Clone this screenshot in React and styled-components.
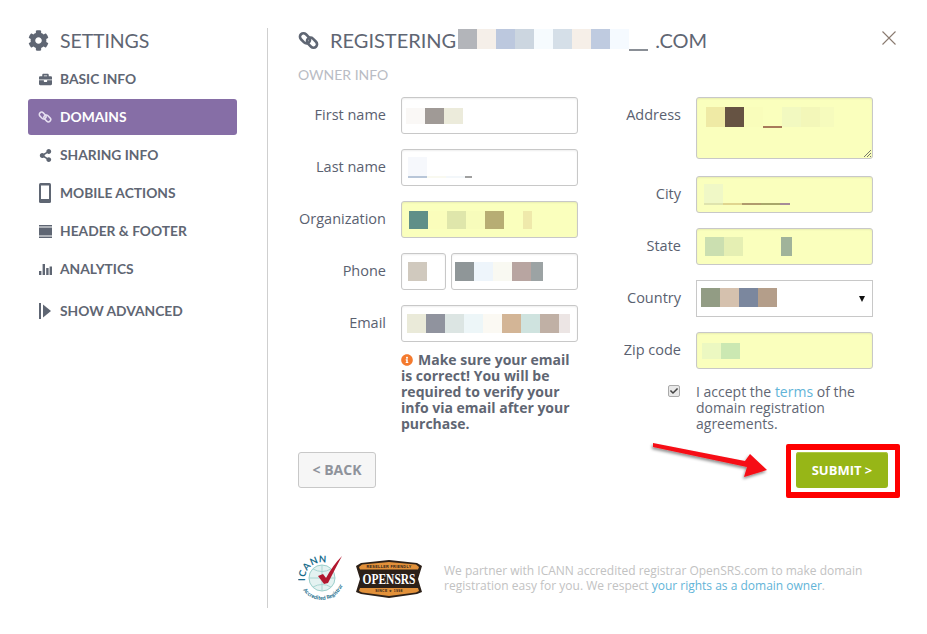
import React from "react";
import styled, { createGlobalStyle } from "styled-components";
import { FaCog, FaBriefcase, FaShareAlt, FaInfoCircle, FaCheck } from "react-icons/fa";

const Global = createGlobalStyle`
  html, body { margin: 0; padding: 0; background: #fff; }
  body { font-family: "Open Sans", "Liberation Sans", sans-serif; color: #5f6673; }
`;

const Page = styled.div`
  display: flex;
  width: 927px;
  height: 634px;
  box-sizing: border-box;
  padding: 28px 0 26px 28px;
`;

const Sidebar = styled.nav`
  width: 209px;
  margin-right: 30px;
  flex: none;
`;

const Brand = styled.div`
  display: flex;
  align-items: center;
  gap: 11px;
  height: 26px;
  margin-bottom: 7px;
  font: 400 19.5px/26px Lato, sans-serif;
  letter-spacing: -0.1px;
  svg { font-size: 21px; margin-top: -2px; }
`;

const NavList = styled.div`
  display: flex;
  flex-direction: column;
  gap: 2px;
`;

const NavItem = styled.div`
  display: flex;
  align-items: center;
  height: 36px;
  padding-left: 10px;
  margin-top: ${(p) => (p.$gap ? "4px" : "0")};
  border-radius: 3px;
  background: ${(p) => (p.$active ? "#866ea6" : "transparent")};
  color: ${(p) => (p.$active ? "#fff" : "#5f6673")};
  font: 700 13.8px/36px Lato, sans-serif;
`;

const NavIcon = styled.span`
  display: flex;
  justify-content: center;
  align-items: center;
  width: 14px;
  margin-right: 8px;
  font-size: 13px;
  color: ${(p) => (p.$active ? "#e6dff0" : "#5f6673")};
`;

const Main = styled.main`
  position: relative;
  display: flex;
  flex-direction: column;
  width: 599px;
  padding-left: 30px;
  border-left: 1px solid #cfcfcf;
`;

const TitleRow = styled.header`
  display: flex;
  align-items: center;
  justify-content: space-between;
  height: 24px;
`;

const Title = styled.h1`
  display: flex;
  align-items: center;
  margin: 0;
  font: 400 20px/24px Lato, sans-serif;
  color: #5f6673;
`;

const TitleIcon = styled.span`
  display: flex;
  margin-right: 11px;
`;

const Close = styled.svg`
  width: 16px;
  height: 16px;
  margin-top: -4px;
`;

const Section = styled.div`
  margin-top: 15px;
  font: 400 14px/16px Lato, sans-serif;
  color: #b9bcc4;
`;

const Columns = styled.div`
  display: grid;
  grid-template-columns: 280px 257px;
  column-gap: 38px;
  margin-top: 14px;
`;

const Column = styled.div`
  display: flex;
  flex-direction: column;
  gap: 15px;
`;

const Row = styled.div`
  display: flex;
  gap: 15px;
  margin-bottom: ${(p) => p.$after || 0}px;
`;

const Label = styled.label`
  flex: 1;
  text-align: right;
  font-size: 14.5px;
  line-height: 36px;
  font-weight: 400;
  color: #5a6170;
`;

const Inputs = styled.div`
  display: flex;
  gap: 5px;
  width: 177px;
  flex: none;
`;

const Field = styled.div`
  position: relative;
  display: flex;
  box-sizing: border-box;
  align-items: ${(p) => (p.$top ? "flex-start" : "center")};
  flex: ${(p) => (p.$w ? `0 0 ${p.$w}px` : "1")};
  height: ${(p) => p.$h || 37}px;
  padding: ${(p) => (p.$top ? "9px 0 0 9px" : `0 0 0 ${p.$pad ?? 6}px`)};
  border: 1px solid #c8c8c8;
  border-radius: 3px;
  background: ${(p) => (p.$fill ? "#faffbd" : "#fff")};
  box-shadow: inset 0 1px 2px rgba(0, 0, 0, 0.07);
`;

const SelectField = styled(Field)`
  border-radius: 0;
  box-shadow: none;
`;

const Caret = styled.span`
  position: absolute;
  right: 7px;
  top: 15px;
  width: 0;
  height: 0;
  border-left: 3px solid transparent;
  border-right: 3px solid transparent;
  border-top: 6px solid #111;
`;

const Grip = styled.svg`
  position: absolute;
  right: 0;
  bottom: 0;
  width: 9px;
  height: 9px;
`;

const Mosaic = styled.div`
  display: flex;
  align-items: flex-start;
  margin: ${(p) => p.$margin || "0"};
`;

const Tile = styled.span`
  display: block;
  box-sizing: content-box;
  width: ${(p) => p.$w || 19}px;
  height: ${(p) => p.$h || 19}px;
  background: ${(p) => p.$c || "transparent"};
  border-bottom: ${(p) => (p.$u ? `2px solid ${p.$u}` : "0")};
`;

const Note = styled.p`
  margin: -5px 0 0 103px;
  width: 172px;
  font-size: 14px;
  line-height: 16px;
  font-weight: 700;
  color: #5f6673;
  svg { font-size: 12px; color: #f47a2e; margin-right: 5px; vertical-align: -1px; }
`;

const Agree = styled.div`
  display: flex;
  font-size: 14px;
  line-height: 16px;
  color: #5f6673;
`;

const Check = styled.span`
  display: flex;
  align-items: center;
  justify-content: center;
  box-sizing: border-box;
  width: 12px;
  height: 12px;
  margin: 1px 16px 0 52px;
  flex: none;
  border: 1px solid #aaa;
  border-radius: 2px;
  background: #e8e8e8;
  color: #444;
  font-size: 8px;
`;

const AgreeText = styled.span`
  width: 170px;
`;

const Link = styled.span`
  color: #62b4d8;
`;

const Actions = styled.div`
  position: relative;
  display: flex;
  justify-content: space-between;
  align-items: center;
  margin-top: 20px;
  width: 590px;
`;

const BackButton = styled.button`
  width: 78px;
  height: 36px;
  padding: 0;
  border: 1px solid #c8c8c8;
  border-radius: 3px;
  background: #f6f6f6;
  color: #8f939b;
  font: 700 14px/34px "Open Sans", sans-serif;
`;

const SubmitWrap = styled.div`
  position: relative;
`;

const SubmitButton = styled.button`
  display: block;
  width: 92px;
  height: 36px;
  padding: 0;
  border: 0;
  border-radius: 3px;
  background: #97b617;
  box-shadow: inset 0 1px 0 #aec845;
  color: #fff;
  font: 700 13px/36px "Open Sans", sans-serif;
`;

const Frame = styled.span`
  position: absolute;
  top: -8px;
  bottom: -10px;
  left: -10px;
  right: -12px;
  border: 5px solid #fe0000;
  border-width: 6px 5px;
  border-radius: 2px;
  pointer-events: none;
`;

const Arrow = styled.svg`
  position: absolute;
  left: 352px;
  top: -12px;
  width: 124px;
  height: 46px;
  overflow: visible;
`;

const Footer = styled.footer`
  display: flex;
  align-items: center;
  margin-top: auto;
  margin-bottom: 3px;
`;

const Logos = styled.div`
  display: flex;
  align-items: center;
  gap: 4px;
  margin-right: 22px;
`;

const FooterText = styled.p`
  margin: -3px 0 0;
  width: 430px;
  font-size: 12px;
  line-height: 15px;
  color: #c2c2c2;
`;

const ChainIcon = ({ size = 21, color = "#5f6673", weight = 3 }) => (
  <svg width={size} height={size} viewBox="0 0 24 24" fill="none" stroke={color} strokeWidth={weight}>
    <rect x="1.5" y="5.5" width="13" height="8" rx="4" transform="rotate(45 8 9.5)" />
    <rect x="9.5" y="10.5" width="13" height="8" rx="4" transform="rotate(45 16 14.5)" />
  </svg>
);
const MobileIcon = () => (
  <svg width="12" height="20" viewBox="0 0 12 20">
    <rect x="0" y="0" width="12" height="20" rx="1.5" fill="#5f6673" />
    <rect x="2" y="2.5" width="8" height="13.5" fill="#fff" />
  </svg>
);
const HeaderIcon = () => (
  <svg width="13" height="13" viewBox="0 0 13 13">
    <rect x="0" y="0" width="13" height="1.5" fill="#5f6673" />
    <rect x="0" y="2.5" width="13" height="8" fill="#5f6673" />
    <rect x="0" y="11.5" width="13" height="1.5" fill="#5f6673" />
  </svg>
);
const ChartIcon = () => (
  <svg width="13" height="11" viewBox="0 0 13 11">
    <rect x="0" y="7" width="2.4" height="4" fill="#5f6673" />
    <rect x="3.6" y="0" width="2.4" height="11" fill="#5f6673" />
    <rect x="7.2" y="4" width="2.4" height="7" fill="#5f6673" />
    <rect x="10.6" y="2.5" width="2.4" height="8.5" fill="#5f6673" />
  </svg>
);
const AdvancedIcon = () => (
  <svg width="12" height="16" viewBox="0 0 12 16">
    <rect x="0" y="0" width="2" height="16" fill="#5f6673" />
    <path d="M4 1.5 L12 8 L4 14.5 Z" fill="#5f6673" />
  </svg>
);

const IcannLogo = () => (
  <svg width="54" height="52" viewBox="0 0 54 52">
    <defs>
      <path id="icannTop" d="M7 28 A17 17 0 0 1 41 25" />
      <path id="icannBottom" d="M5 37 A22.5 22.5 0 0 0 46 22" />
    </defs>
    <circle cx="24" cy="25" r="13" fill="#e4f2f1" stroke="#9ccfcb" strokeWidth="1" />
    <path d="M11 25 H37 M24 12 V38 M15 16 Q24 21 33 16 M15 34 Q24 29 33 34" stroke="#a9d6d2" strokeWidth="1" fill="none" />
    <text fontFamily="Lato, sans-serif" fontWeight="700" fontSize="9.5" fill="#1a6d8c" letterSpacing="0.5">
      <textPath href="#icannTop">ICANN</textPath>
    </text>
    <text fontFamily="Lato, sans-serif" fontWeight="700" fontSize="5.4" fill="#1a6d8c">
      <textPath href="#icannBottom">Accredited Registrar</textPath>
    </text>
    <path d="M20 23 L25 21 L28 25 Q35 12 44 3 Q37 16 30 30 L26 31 Z" fill="#b2182f" />
  </svg>
);

const OpenSrsLogo = () => (
  <svg width="66" height="38" viewBox="0 0 66 38">
    <path d="M5 3 L33 0 L61 3 L66 6 L62 19 L66 32 L61 34 L33 38 L5 34 L0 32 L4 19 L0 6 Z" fill="#2c2018" />
    <path d="M6 4.5 L33 2 L60 4.5 L63 7 L62 9.5 H4 L3 7 Z" fill="#e2913a" />
    <path d="M4 28 H62 L63 31 L60 32.5 L33 36 L6 32.5 L3 31 Z" fill="#e2913a" />
    <text x="33" y="8.3" textAnchor="middle" fontFamily="Liberation Sans, sans-serif" fontWeight="700" fontSize="3.8" letterSpacing="0.3" fill="#2c2018">RESELLER FRIENDLY</text>
    <text transform="translate(33 24) scale(1 1.3)" textAnchor="middle" fontFamily="Liberation Serif, serif" fontWeight="700" fontSize="11.5" fill="#fff">OPENSRS</text>
    <text x="33" y="32" textAnchor="middle" fontFamily="Liberation Sans, sans-serif" fontWeight="700" fontSize="3.4" letterSpacing="0.4" fill="#2c2018">SINCE ★ 1998</text>
  </svg>
);

const App = () => (
  <Page>
    <Global />
    <Sidebar>
      <Brand><FaCog />SETTINGS</Brand>
      <NavList>
        <NavItem><NavIcon><FaBriefcase /></NavIcon>BASIC INFO</NavItem>
        <NavItem $active><NavIcon $active><ChainIcon size={14} color="#e6dff0" weight={2.6} /></NavIcon>DOMAINS</NavItem>
        <NavItem><NavIcon><FaShareAlt /></NavIcon>SHARING INFO</NavItem>
        <NavItem><NavIcon><MobileIcon /></NavIcon>MOBILE ACTIONS</NavItem>
        <NavItem><NavIcon><HeaderIcon /></NavIcon>HEADER &amp; FOOTER</NavItem>
        <NavItem><NavIcon><ChartIcon /></NavIcon>ANALYTICS</NavItem>
        <NavItem $gap><NavIcon><AdvancedIcon /></NavIcon>SHOW ADVANCED</NavItem>
      </NavList>
    </Sidebar>
    <Main>
      <TitleRow>
        <Title>
          <TitleIcon><ChainIcon /></TitleIcon>REGISTERING
          <Mosaic $margin="0 7px 0 2px">
            {["#b3b5ba", "#f5efe9", "#bcc8de", "#ccd6e0", "#f6fbfe", "#d5dfe8", "#f6efe8", "#bfcbe0", "#f5faff"].map((c) => (
              <Tile key={c} $c={c} $h={20} />
            ))}
            <Tile $h={20} $u="#8a8f96" />
          </Mosaic>
          .COM
        </Title>
        <Close viewBox="0 0 16 16">
          <path d="M1.5 1.5 L14.5 14.5 M14.5 1.5 L1.5 14.5" stroke="#8a7a70" strokeWidth="1.1" fill="none" />
        </Close>
      </TitleRow>
      <Section>OWNER INFO</Section>
      <Columns>
        <Column>
          <Row>
            <Label>First name</Label>
            <Inputs><Field><Mosaic $margin="0 0 0 -2px">
              <Tile $c="#faf8f6" $h={16} /><Tile $c="#a09a96" $h={16} /><Tile $c="#ecebdb" $h={16} />
            </Mosaic></Field></Inputs>
          </Row>
          <Row>
            <Label>Last name</Label>
            <Inputs><Field $pad={6}><Mosaic>
              <Tile $c="#f6f8fc" $u="#b8c6d8" /><Tile $w={19} $u="#f9f9f0" /><Tile $w={19} $u="#f3f7fa" /><Tile $w={7} $u="#a0a0a0" />
            </Mosaic></Field></Inputs>
          </Row>
          <Row>
            <Label>Organization</Label>
            <Inputs><Field $fill $pad={7}><Mosaic>
              <Tile $c="#5f8f88" $h={18} /><Tile $c="#fafdbb" $h={18} /><Tile $c="#dfe6ab" $h={18} /><Tile $c="#f7fcbb" $h={18} /><Tile $c="#b7ad74" $h={18} /><Tile $h={18} /><Tile $c="#efe9ab" $w={9} $h={18} />
            </Mosaic></Field></Inputs>
          </Row>
          <Row>
            <Label>Phone</Label>
            <Inputs>
              <Field $w={45}><Tile $c="#d0c9be" /></Field>
              <Field $pad={3}><Mosaic>
                <Tile $c="#8f9698" /><Tile $c="#eef5fb" /><Tile $c="#f9f9f2" /><Tile $c="#b8a5a1" /><Tile $c="#9ca3a4" $w={12} />
              </Mosaic></Field>
            </Inputs>
          </Row>
          <Row>
            <Label>Email</Label>
            <Inputs><Field $pad={5}><Mosaic>
              <Tile $c="#eaead9" /><Tile $c="#90939e" /><Tile $c="#dce5e3" /><Tile $c="#edf6f8" /><Tile $c="#fbf9f3" /><Tile $c="#d3b596" /><Tile $c="#cfe3df" /><Tile $c="#c0b0a5" /><Tile $c="#ece5e4" $w={11} />
            </Mosaic></Field></Inputs>
          </Row>
          <Note><FaInfoCircle />Make sure your email is correct! You will be required to verify your info via email after your purchase.</Note>
        </Column>
        <Column>
          <Row $after={2}>
            <Label>Address</Label>
            <Inputs><Field $fill $top $h={62}>
              <Mosaic>
                <Tile $c="#efeaa5" $h={20} /><Tile $c="#665343" $h={20} /><Tile $c="#f9fdbb" $h={20} /><Tile $h={19} $u="#a87a5a" /><Tile $c="#f2f9c0" $h={20} /><Tile $c="#f3f7b9" $h={20} /><Tile $c="#f6fbbd" $w={14} $h={20} />
              </Mosaic>
              <Grip viewBox="0 0 9 9"><path d="M1 8 L8 1 M4 8 L8 4 M7 8 L8 7" stroke="#555" strokeWidth="0.8" /></Grip>
            </Field></Inputs>
          </Row>
          <Row>
            <Label>City</Label>
            <Inputs><Field $fill $pad={7}><Mosaic>
              <Tile $c="#f0f8c6" $u="#dfe4ae" /><Tile $u="#e0d58f" /><Tile $u="#b09b6d" /><Tile $u="#a8a76a" /><Tile $w={10} $u="#a68c98" />
            </Mosaic></Field></Inputs>
          </Row>
          <Row>
            <Label>State</Label>
            <Inputs><Field $fill $pad={8}><Mosaic>
              <Tile $c="#cbdfb0" /><Tile $c="#e5efb3" /><Tile $w={19} /><Tile $w={19} /><Tile $c="#a0b39a" $w={11} />
            </Mosaic></Field></Inputs>
          </Row>
          <Row>
            <Label>Country</Label>
            <Inputs>
              <SelectField $pad={4}>
                <Mosaic $margin="-3px 0 0">
                  <Tile $c="#929c84" /><Tile $c="#d5c1ae" /><Tile $c="#7b879e" /><Tile $c="#b49e8a" />
                </Mosaic>
                <Caret />
              </SelectField>
            </Inputs>
          </Row>
          <Row>
            <Label>Zip code</Label>
            <Inputs><Field $fill $pad={5}><Mosaic>
              <Tile $c="#ecf8c1" $h={16} /><Tile $c="#cbe8b2" $h={16} />
            </Mosaic></Field></Inputs>
          </Row>
          <Agree>
            <Check><FaCheck /></Check>
            <AgreeText>I accept the <Link>terms</Link> of the domain registration agreements.</AgreeText>
          </Agree>
        </Column>
      </Columns>
      <Actions>
        <BackButton>&lt; BACK</BackButton>
        <Arrow viewBox="0 0 124 46">
          <defs>
            <filter id="arrowShadow" x="-10%" y="-30%" width="120%" height="170%">
              <feDropShadow dx="-1" dy="2" stdDeviation="1.5" floodColor="#000" floodOpacity="0.45" />
            </filter>
          </defs>
          <polygon points="3,3 95,21 100,14 117,30 94,37 97,27 3,7" fill="#f60a12" filter="url(#arrowShadow)" />
        </Arrow>
        <SubmitWrap>
          <SubmitButton>SUBMIT &gt;</SubmitButton>
          <Frame />
        </SubmitWrap>
      </Actions>
      <Footer>
        <Logos><IcannLogo /><OpenSrsLogo /></Logos>
        <FooterText>We partner with ICANN accredited registrar OpenSRS.com to make domain registration easy for you. We respect <Link>your rights as a domain owner</Link>.</FooterText>
      </Footer>
    </Main>
  </Page>
);

export default App;
